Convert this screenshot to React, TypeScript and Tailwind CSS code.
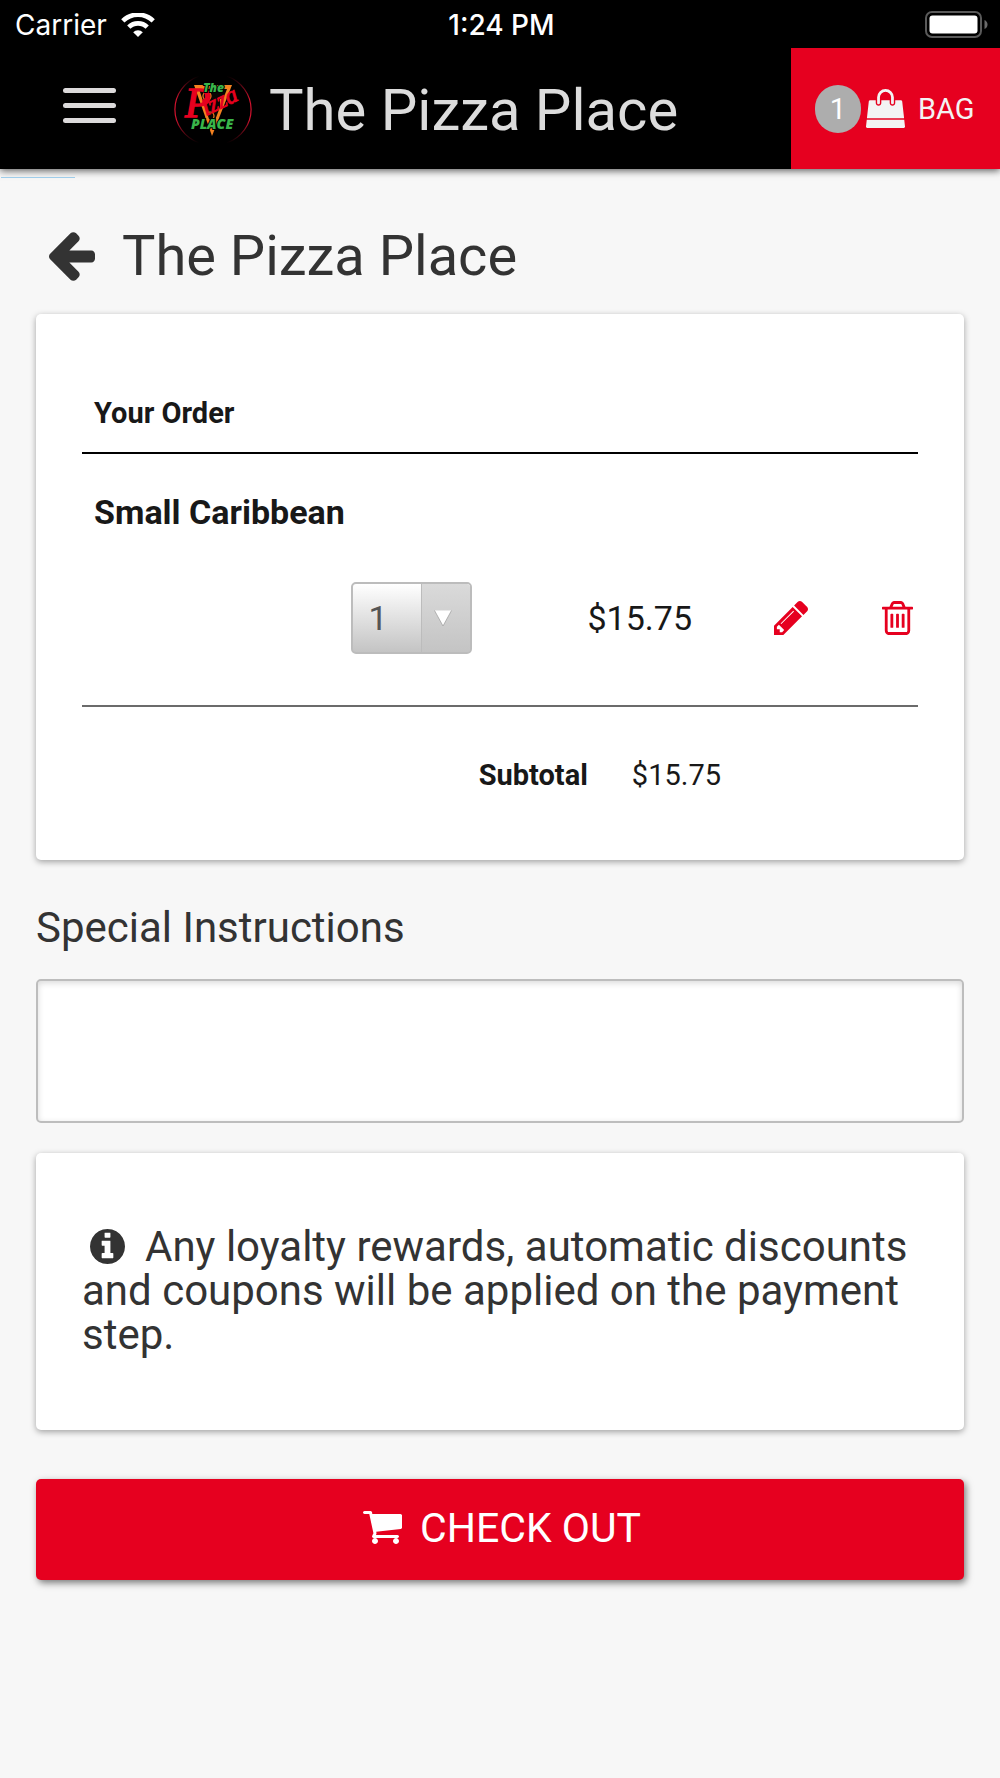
import { useState } from "react";

interface IconProps {
  viewBox: string;
  path: string;
  className: string;
}

const icons = Object.freeze({
  arrowLeft: {
    viewBox: "192 181 1472 1558",
    path: "M1664 896v128q0 53-32.5 90.5t-84.5 37.5h-704l293 294q38 36 38 90t-38 90l-75 76q-37 37-90 37-52 0-91-37l-651-652q-37-37-37-90 0-52 37-91l651-650q38-38 91-38 52 0 90 38l75 74q38 38 38 91t-38 91l-293 293h704q52 0 84.5 37.5t32.5 90.5z",
  },
  info: {
    viewBox: "128 128 1536 1536",
    path: "M1152 1376v-160q0-14-9-23t-23-9h-96v-512q0-14-9-23t-23-9h-320q-14 0-23 9t-9 23v160q0 14 9 23t23 9h96v320h-96q-14 0-23 9t-9 23v160q0 14 9 23t23 9h448q14 0 23-9t9-23zm-128-896v-160q0-14-9-23t-23-9h-192q-14 0-23 9t-9 23v160q0 14 9 23t23 9h192q14 0 23-9t9-23zm640 416q0 209-103 385.5t-279.5 279.5-385.5 103-385.5-103-279.5-279.5-103-385.5 103-385.5 279.5-279.5 385.5-103 385.5 103 279.5 279.5 103 385.5z",
  },
  pencil: {
    viewBox: "128 149 1515 1515",
    path: "M491 1536l91-91-235-235-91 91v107h128v128h107zm523-928q0-22-22-22-10 0-17 7l-542 542q-7 7-7 17 0 22 22 22 10 0 17-7l542-542q7-7 7-17zm-54-192l416 416-832 832h-416v-416zm683 96q0 53-37 90l-166 166-416-416 166-165q36-38 90-38 53 0 91 38l235 234q37 39 37 91z",
  },
  trash: {
    viewBox: "192 128 1408 1536",
    path: "M704 736v576q0 14-9 23t-23 9h-64q-14 0-23-9t-9-23v-576q0-14 9-23t23-9h64q14 0 23 9t9 23zm256 0v576q0 14-9 23t-23 9h-64q-14 0-23-9t-9-23v-576q0-14 9-23t23-9h64q14 0 23 9t9 23zm256 0v576q0 14-9 23t-23 9h-64q-14 0-23-9t-9-23v-576q0-14 9-23t23-9h64q14 0 23 9t9 23zm128 724v-948h-896v948q0 22 7 40.5t14.5 27 10.5 8.5h832q3 0 10.5-8.5t14.5-27 7-40.5zm-672-1076h448l-48-117q-7-9-17-11h-317q-10 2-17 11zm928 32v64q0 14-9 23t-23 9h-96v948q0 83-47 143.5t-113 60.5h-832q-66 0-113-58.5t-47-141.5v-952h-96q-14 0-23-9t-9-23v-64q0-14 9-23t23-9h309l70-167q15-37 54-63t79-26h320q40 0 79 26t54 63l70 167h309q14 0 23 9t9 23z",
  },
  cart: {
    viewBox: "64 256 1664 1408",
    path: "M704 1536q0 52-38 90t-90 38-90-38-38-90 38-90 90-38 90 38 38 90zm896 0q0 52-38 90t-90 38-90-38-38-90 38-90 90-38 90 38 38 90zm128-1088v512q0 24-16.5 42.5t-40.5 21.5l-1044 122q13 60 13 70 0 16-24 64h920q26 0 45 19t19 45-19 45-45 19h-1024q-26 0-45-19t-19-45q0-11 8-31.5t16-36 21.5-40 15.5-29.5l-177-823h-204q-26 0-45-19t-19-45 19-45 45-19h256q16 0 28.5 6.5t19.5 15.5 13 24.5 8 26 5.5 29.5 4.5 26h1201q26 0 45 19t19 45z",
  },
  bag: {
    viewBox: "0 0 1792 1792",
    path: "M1757 1408l35 313q3 28-16 50-19 21-48 21h-1664q-29 0-48-21-19-22-16-50l35-313h1722zm-93-839l86 775h-1708l86-775q3-24 21-40.5t43-16.5h256v128q0 53 37.5 90.5t90.5 37.5 90.5-37.5 37.5-90.5v-128h384v128q0 53 37.5 90.5t90.5 37.5 90.5-37.5 37.5-90.5v-128h256q25 0 43 16.5t21 40.5zm-384-185v256q0 26-19 45t-45 19-45-19-19-45v-256q0-106-75-181t-181-75-181 75-75 181v256q0 26-19 45t-45 19-45-19-19-45v-256q0-159 112.5-271.5t271.5-112.5 271.5 112.5 112.5 271.5z",
  },
});

function Icon({ viewBox, path, className }: IconProps) {
  return (
    <svg viewBox={viewBox} className={className} fill="currentColor" aria-hidden="true">
      <path d={path} />
    </svg>
  );
}

function StatusBar() {
  return (
    <div className="grid h-12 grid-cols-3 items-center pl-[15px] pr-3 pt-[2px] font-['Inter',sans-serif] text-[28px] leading-8 text-white">
      <div className="flex items-center gap-[14px]">
        <span>Carrier</span>
        <svg viewBox="0 0 34 24" className="h-6 w-[34px]" fill="none" aria-hidden="true">
          <path d="M1.8 7.9 A21.6 21.6 0 0 1 32.2 7.9" stroke="#fff" strokeWidth="4.6" />
          <path d="M7.8 14.2 A13 13 0 0 1 26.2 14.2" stroke="#fff" strokeWidth="4.6" />
          <path d="M17 24 L12.2 19.2 A6.8 6.8 0 0 1 21.8 19.2 Z" fill="#fff" />
        </svg>
      </div>
      <span className="text-center font-medium">1:24 PM</span>
      <svg viewBox="0 0 63 28" className="h-7 w-[63px] justify-self-end" aria-hidden="true">
        <rect x="1" y="1" width="55" height="25" rx="6" fill="none" stroke="#5a5a5a" strokeWidth="2" />
        <rect x="4.5" y="4.5" width="48" height="18" rx="3" fill="#fff" />
        <path d="M59.5 9 Q62.5 10.5 62.5 13.5 Q62.5 16.5 59.5 18 Z" fill="#6a6a6a" />
      </svg>
    </div>
  );
}

function Logo() {
  return (
    <svg viewBox="0 0 78 70" className="h-[70px] w-[78px]" role="img" aria-label="The Pizza Place">
      <defs>
        <linearGradient id="ring" x1="0" y1="0" x2="0" y2="1">
          <stop offset="0" stopColor="#d2122e" stopOpacity="0" />
          <stop offset="0.35" stopColor="#d2122e" />
          <stop offset="0.65" stopColor="#d2122e" />
          <stop offset="1" stopColor="#d2122e" stopOpacity="0" />
        </linearGradient>
      </defs>
      <path d="M25 1 A38 36 0 0 0 25 68" fill="none" stroke="url(#ring)" strokeWidth="1.2" />
      <path d="M53 1 A38 36 0 0 1 53 68" fill="none" stroke="url(#ring)" strokeWidth="1.2" />
      {/* slice */}
      <path d="M20 10 H58 L38 61 Z" fill="#f58220" />
      <path d="M25 14 H53 L38 53 Z" fill="#0a0503" />
      <circle cx="33" cy="21" r="4" fill="none" stroke="#f58220" strokeWidth="1.2" />
      <circle cx="36" cy="41" r="4" fill="none" stroke="#f58220" strokeWidth="1.2" />
      <path d="M46 24 L51 22 L46 36 Z" fill="#f58220" />
      <g fontFamily="'Liberation Serif', serif" fontStyle="italic" fill="#e6001f" stroke="#e6001f">
        <text x="11" y="42" fontSize="42" strokeWidth="1.4">P</text>
        <text transform="translate(32 41) rotate(-26)" fontSize="24" strokeWidth="0.8">izza</text>
      </g>
      <g
        fontFamily="'Open Sans', sans-serif"
        fontStyle="italic"
        fontWeight="800"
        fill="#39b54a"
        stroke="#000"
        strokeWidth="2"
        paintOrder="stroke"
      >
        <text x="29" y="17" fontSize="12">The</text>
        <text x="17" y="54" fontSize="14">PLACE</text>
      </g>
    </svg>
  );
}

function NavBar({ count }: { count: number }) {
  return (
    <nav className="flex h-[121px] items-stretch text-[#dcdcdc]">
      <div className="flex min-w-0 flex-1 items-center pl-[63px]">
        <button type="button" aria-label="Menu" className="flex w-[53px] flex-col gap-[10px] pb-[6px]">
          <span className="h-[5px] rounded-full bg-[#dcdadb]" />
          <span className="h-[5px] rounded-full bg-[#dcdadb]" />
          <span className="h-[5px] rounded-full bg-[#dcdadb]" />
        </button>
        <a href="#home" className="ml-[58px] flex items-center gap-[17px] whitespace-nowrap pt-[2px] text-[58px] leading-[64px]">
          <Logo />
          <span>The Pizza Place</span>
        </a>
      </div>
      <a href="#bag" className="flex w-[209px] shrink-0 items-center bg-[#e6001f] pl-6 text-[29px] leading-8 text-[#f3f3f3]">
        <span className="flex h-12 w-[46px] items-center justify-center rounded-full bg-[#adadad] text-white">
          {count}
        </span>
        <Icon {...icons.bag} className="ml-[5px] size-[39px]" />
        <span className="ml-[13px]">BAG</span>
      </a>
    </nav>
  );
}

function OrderCard({ count, onCount }: { count: number; onCount: (n: number) => void }) {
  return (
    <section className="rounded-[5px] bg-white px-[46px] pb-[65px] pt-[79px] text-[#181818] shadow-[0_2px_6px_rgba(0,0,0,0.35)]">
      <h2 className="border-b-2 border-black pb-[19px] pl-3 text-[29px] font-bold leading-10">Your Order</h2>
      <div className="border-b-2 border-[#6b6b6b] pb-[51px] pt-[38px]">
        <h3 className="pl-3 text-[34px] font-bold leading-10">Small Caribbean</h3>
        <div className="mt-[50px] flex items-center justify-end pr-[5px]">
          <div className="relative">
            <select
              aria-label="Quantity"
              value={count}
              onChange={(e) => onCount(Number(e.target.value))}
              className="block h-[72px] w-[121px] appearance-none rounded-[5px] border-2 border-[#bcbcbc] bg-linear-to-b from-white to-[#c4c4c4] pl-[15px] text-[34px] text-[#555]"
            >
              <option>1</option>
              <option>2</option>
              <option>3</option>
            </select>
            <span className="pointer-events-none absolute inset-y-[2px] right-[2px] flex w-[49px] items-center rounded-r-[3px] border-l border-[#bcbcbc] bg-linear-to-b from-[#dadada] to-[#c4c4c4] pl-3">
              <svg viewBox="0 0 18 17" className="h-[17px] w-[18px]" aria-hidden="true">
                <path d="M0.5 0.5 L9 16 L17.5 0.5" fill="#fff" stroke="#999" strokeWidth="0.7" />
              </svg>
            </span>
          </div>
          <span className="ml-[115px] text-[34px] leading-10">$15.75</span>
          <button type="button" aria-label="Edit item" className="ml-[82px] text-[#e6001f]">
            <Icon {...icons.pencil} className="size-[34px]" />
          </button>
          <button type="button" aria-label="Remove item" className="ml-[74px] text-[#e6001f]">
            <Icon {...icons.trash} className="h-[34px] w-[31px]" />
          </button>
        </div>
      </div>
      <dl className="flex justify-end gap-[44px] pr-[197px] pt-12 text-[29px] leading-10">
        <dt className="font-bold">Subtotal</dt>
        <dd>$15.75</dd>
      </dl>
    </section>
  );
}

export default function App() {
  const [count, setCount] = useState(1);
  const [notes, setNotes] = useState("");

  return (
    <div className="min-h-screen bg-[#f7f7f7] font-['Roboto',sans-serif] text-[#333]">
      <header className="relative bg-black shadow-[0_2px_7px_rgba(0,0,0,0.6)]">
        <StatusBar />
        <NavBar count={count} />
        {/* page load progress */}
        <div className="absolute left-px top-full mt-2 h-px w-[74px] bg-[#9fcdea]" />
      </header>

      <main className="px-9 pb-12">
        <h1 className="flex items-center gap-[27px] pb-[26px] pl-[13px] pt-[55px] text-[56px] leading-[64px]">
          <a href="#menu" aria-label="Back">
            <Icon {...icons.arrowLeft} className="h-[49px] w-[46px]" />
          </a>
          The Pizza Place
        </h1>

        <OrderCard count={count} onCount={setCount} />

        <label htmlFor="notes" className="mt-11 block text-[42px] leading-[48px]">
          Special Instructions
        </label>
        <textarea
          id="notes"
          value={notes}
          onChange={(e) => setNotes(e.target.value)}
          className="mt-[27px] block h-36 w-full resize-none rounded-[5px] border-2 border-[#bdbdbd] bg-white p-4 text-[34px] shadow-[inset_0_2px_6px_rgba(0,0,0,0.15)]"
        />

        <section className="mt-[30px] rounded-[5px] bg-white px-[46px] pb-[73px] pt-[72px] shadow-[0_2px_6px_rgba(0,0,0,0.35)]">
          <p className="text-[42px] leading-[44px]">
            <Icon {...icons.info} className="ml-2 mr-5 inline size-[35px] align-[-3px]" />
            Any loyalty rewards, automatic discounts and coupons will be applied on the payment step.
          </p>
        </section>

        <button
          type="button"
          className="mt-[49px] flex h-[101px] w-full items-center justify-center gap-[18px] rounded-[5px] bg-[#e6001f] pb-1 pl-1 text-[41px] leading-[48px] text-white shadow-[2px_3px_7px_rgba(0,0,0,0.5)]"
        >
          <Icon {...icons.cart} className="h-[33px] w-[39px]" />
          CHECK OUT
        </button>
      </main>
    </div>
  );
}
